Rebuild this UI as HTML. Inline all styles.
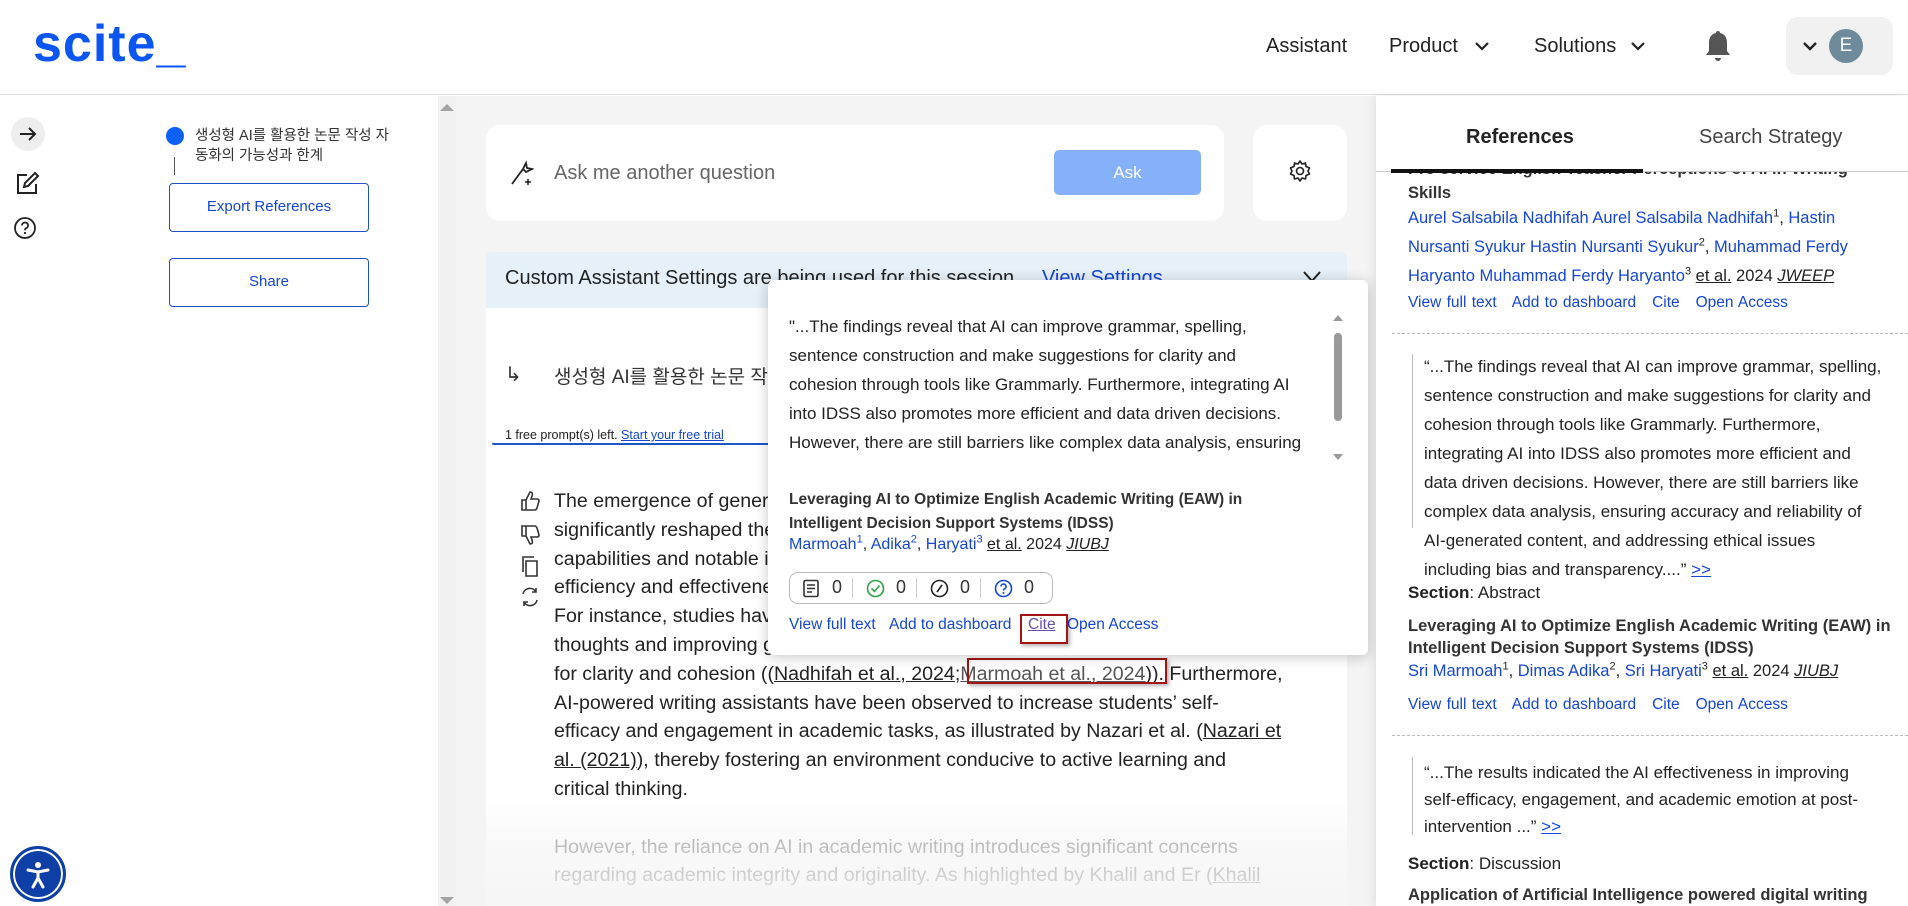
<!DOCTYPE html>
<html><head><meta charset="utf-8"><style>
*{box-sizing:border-box;margin:0;padding:0}
body{width:1908px;height:906px;overflow:hidden;font-family:"Liberation Sans","Noto Sans CJK KR",sans-serif;background:#fff;color:#222;position:relative}
.a{position:absolute}
.blue{color:#1546d6}
u{text-decoration:underline}
sup{line-height:0;font-size:11px}
</style></head><body>
<!-- header -->
<div class="a" style="left:0;top:0;width:1908px;height:95px;border-bottom:1px solid #ddd;background:#fff"></div>
<div class="a" style="left:33px;top:14px;font-size:52px;font-weight:bold;color:#0b55f0;letter-spacing:1px">scite_</div>
<div class="a" style="left:1266px;top:35px;font-size:20px;color:#222">Assistant</div>
<div class="a" style="left:1389px;top:35px;font-size:20px;color:#222">Product</div>
<svg class="a" style="left:1474px;top:40px" width="16" height="12" viewBox="0 0 16 12"><path d="M2 3l6 6 6-6" stroke="#222" stroke-width="2.2" fill="none"/></svg>
<div class="a" style="left:1534px;top:35px;font-size:20px;color:#222">Solutions</div>
<svg class="a" style="left:1630px;top:40px" width="16" height="12" viewBox="0 0 16 12"><path d="M2 3l6 6 6-6" stroke="#222" stroke-width="2.2" fill="none"/></svg>
<svg class="a" style="left:1703px;top:29px" width="30" height="34" viewBox="0 0 30 34"><path d="M15 2c1.5 0 2 1 2 2c5 1 7 5 7 10v8l3 4H3l3-4v-8c0-5 2-9 7-10c0-1 .5-2 2-2z" fill="#555"/><path d="M12 29a3 3 0 0 0 6 0z" fill="#555"/></svg>
<div class="a" style="left:1786px;top:17px;width:107px;height:58px;border-radius:12px;background:#f1f1f1"></div>
<svg class="a" style="left:1802px;top:40px" width="16" height="12" viewBox="0 0 16 12"><path d="M2 3l6 6 6-6" stroke="#222" stroke-width="2.4" fill="none"/></svg>
<div class="a" style="left:1829px;top:29px;width:34px;height:34px;border-radius:50%;background:#6f8a9b;color:#fff;font-size:19px;text-align:center;line-height:34px">E</div>

<!-- left nav -->
<div class="a" style="left:11px;top:117px;width:34px;height:34px;border-radius:50%;background:#eee"></div>
<svg class="a" style="left:17px;top:124px" width="22" height="20" viewBox="0 0 22 20"><path d="M3 10h15M12 4l6 6-6 6" stroke="#222" stroke-width="2" fill="none"/></svg>
<svg class="a" style="left:15px;top:170px" width="26" height="26" viewBox="0 0 26 26"><path d="M12 5H3v18h18v-9" stroke="#222" stroke-width="2" fill="none"/><path d="M9 17l1-4 10-10 3 3-10 10z" stroke="#222" stroke-width="2" fill="none"/></svg>
<svg class="a" style="left:13px;top:216px" width="24" height="24" viewBox="0 0 24 24"><circle cx="12" cy="12" r="10" stroke="#222" stroke-width="1.8" fill="none"/><path d="M9 9.5a3 3 0 1 1 4 2.8c-.8.4-1 1-1 2" stroke="#222" stroke-width="1.8" fill="none"/><circle cx="12" cy="17" r="1.1" fill="#222"/></svg>

<div class="a" style="left:166px;top:127px;width:18px;height:18px;border-radius:50%;background:#0b60f5"></div>
<div class="a" style="left:174px;top:157px;width:1px;height:18px;background:#555"></div>
<div class="a" style="left:195px;top:126px;font-size:14.5px;line-height:20px;color:#333;width:220px">생성형 AI를 활용한 논문 작성 자<br>동화의 가능성과 한계</div>
<div class="a" style="left:169px;top:183px;width:200px;height:49px;border:1.5px solid #1f4fc9;border-radius:4px;text-align:center;line-height:46px;font-size:15px;color:#1546d6">Export References</div>
<div class="a" style="left:169px;top:258px;width:200px;height:49px;border:1.5px solid #1f4fc9;border-radius:4px;text-align:center;line-height:46px;font-size:15px;color:#1546d6">Share</div>

<!-- scrollbar -->
<div class="a" style="left:438px;top:96px;width:18px;height:810px;background:#f1f1f1"></div>
<div class="a" style="left:440px;top:104px;width:0;height:0;border-left:7px solid transparent;border-right:7px solid transparent;border-bottom:7px solid #a3a3a3"></div>
<div class="a" style="left:440px;top:897px;width:0;height:0;border-left:7px solid transparent;border-right:7px solid transparent;border-top:7px solid #a3a3a3"></div>

<!-- main -->
<div class="a" style="left:456px;top:96px;width:920px;height:810px;background:#f4f4f4"></div>
<div class="a" style="left:486px;top:125px;width:738px;height:96px;background:#fff;border-radius:14px"></div>
<svg class="a" style="left:508px;top:160px" width="26" height="28" viewBox="0 0 26 28"><path d="M4 24L15 9M15 9l3-6 1 5 5 1-6 3z" stroke="#222" stroke-width="1.8" fill="none"/><path d="M20 19v6M17 22h6" stroke="#222" stroke-width="1.6"/></svg>
<div class="a" style="left:554px;top:162px;font-size:20px;color:#666">Ask me another question</div>
<div class="a" style="left:1054px;top:150px;width:147px;height:45px;border-radius:5px;background:#84b1fa;color:#fff;font-size:17px;text-align:center;line-height:45px">Ask</div>
<div class="a" style="left:1253px;top:125px;width:94px;height:96px;background:#fff;border-radius:14px"></div>
<svg class="a" style="left:1288px;top:159px" width="24" height="24" viewBox="0 0 24 24"><path d="M12 2l2 3 3.5-1 .5 3.5L21.5 9 20 12l1.5 3-3.5 1.5-.5 3.5-3.5-1-2 3-2-3-3.5 1-.5-3.5L2.5 15 4 12 2.5 9 6 7.5 6.5 4 10 5z" stroke="#222" stroke-width="1.6" fill="none" stroke-linejoin="round"/><circle cx="12" cy="12" r="3.5" stroke="#222" stroke-width="1.6" fill="none"/></svg>

<div class="a" style="left:486px;top:252px;width:861px;height:56px;background:#e6f0f8;border-radius:6px 6px 0 0"></div>
<div class="a" style="left:505px;top:267px;font-size:20px;color:#222">Custom Assistant Settings are being used for this session. &nbsp;&nbsp; <span class="blue">View Settings</span></div>
<svg class="a" style="left:1302px;top:270px" width="20" height="14" viewBox="0 0 20 14"><path d="M2 2l8 9 8-9" stroke="#222" stroke-width="2" fill="none"/></svg>
<div class="a" style="left:486px;top:308px;width:861px;height:598px;background:#fff"></div>
<div class="a" style="left:505px;top:362px;font-size:20px;color:#333">↳</div>
<div class="a" style="left:554px;top:362px;font-size:19px;color:#333">생성형 AI를 활용한 논문 작성 자동화의 가능성과 한계</div>
<div class="a" style="left:505px;top:428px;font-size:12.5px;color:#222">1 free prompt(s) left. <u class="blue">Start your free trial</u></div>
<div class="a" style="left:492px;top:443px;width:855px;height:2px;background:#1d56c9;border-radius:0 0 0 8px"></div>

<!-- action icons -->
<svg class="a" style="left:520px;top:490px" width="20" height="22" viewBox="0 0 20 22"><path d="M2 10h4v10H2zM6 10l4-8c2 0 3 1 2 4l-1 3h6c1.5 0 2 1 2 2l-2 7c-.5 1-1 2-2 2H6" stroke="#333" stroke-width="1.6" fill="none"/></svg>
<svg class="a" style="left:520px;top:524px" width="20" height="22" viewBox="0 0 20 22"><path d="M2 2h4v10H2zM6 12l4 8c2 0 3-1 2-4l-1-3h6c1.5 0 2-1 2-2l-2-7c-.5-1-1-2-2-2H6" stroke="#333" stroke-width="1.6" fill="none"/></svg>
<svg class="a" style="left:520px;top:555px" width="20" height="22" viewBox="0 0 20 22"><path d="M6 6h11v15H6zM3 17V2h11" stroke="#333" stroke-width="1.6" fill="none"/></svg>
<svg class="a" style="left:520px;top:585px" width="20" height="24" viewBox="0 0 20 24"><path d="M3 9a7 7 0 0 1 13-2M17 15a7 7 0 0 1-13 2M16 3v4h-4M4 21v-4h4" stroke="#333" stroke-width="1.6" fill="none"/></svg>

<div class="a" style="left:554px;top:487px;width:800px;font-size:19.6px;line-height:28.8px;color:#222;white-space:nowrap">
The emergence of generative AI technologies, such as large language models, has<br>
significantly reshaped the landscape of academic writing by offering advanced<br>
capabilities and notable improvements in writing quality, productivity,<br>
efficiency and effectiveness for students and researchers in higher education.<br>
For instance, studies have demonstrated that AI tools assist in organizing<br>
thoughts and improving grammar, spelling, and sentence construction, making suggestions<br>
for clarity and cohesion ((<u>Nadhifah et al., 2024</u>;<u style="color:#555">Marmoah et al., 2024</u>)). Furthermore,<br>
AI-powered writing assistants have been observed to increase students’ self-<br>
efficacy and engagement in academic tasks, as illustrated by Nazari et al. (<u>Nazari et</u><br>
<u>al. (2021)</u>), thereby fostering an environment conducive to active learning and<br>
critical thinking.<br><br>
<span style="color:#777">However, the reliance on AI in academic writing introduces significant concerns<br>
regarding academic integrity and originality. As highlighted by Khalil and Er (<u>Khalil</u></span>
</div>
<div class="a" style="left:486px;top:800px;width:861px;height:106px;background:linear-gradient(rgba(244,244,244,0),rgba(244,244,244,.55) 40%,rgba(244,244,244,.85))"></div>
<div class="a" style="left:967px;top:658px;width:200px;height:26px;border:2px solid #a31515;box-shadow:2px 2px 4px rgba(0,0,0,.3)"></div>

<!-- popup -->
<div class="a" style="left:768px;top:280px;width:600px;height:375px;background:#fff;border-radius:6px;box-shadow:0 2px 14px rgba(0,0,0,.22)"></div>
<div class="a" style="left:789px;top:312px;width:545px;height:150px;overflow:hidden;font-size:17px;line-height:29px;color:#222;white-space:nowrap">"...The findings reveal that AI can improve grammar, spelling,<br>sentence construction and make suggestions for clarity and<br>cohesion through tools like Grammarly. Furthermore, integrating AI<br>into IDSS also promotes more efficient and data driven decisions.<br>However, there are still barriers like complex data analysis, ensuring<br>accuracy and reliability of AI-generated content, and addressing ethical</div>
<div class="a" style="left:1333px;top:315px;width:0;height:0;border-left:5px solid transparent;border-right:5px solid transparent;border-bottom:6px solid #999"></div>
<div class="a" style="left:1334px;top:333px;width:8px;height:88px;border-radius:4px;background:#999"></div>
<div class="a" style="left:1333px;top:454px;width:0;height:0;border-left:5px solid transparent;border-right:5px solid transparent;border-top:6px solid #999"></div>
<div class="a" style="left:789px;top:488px;font-size:15.5px;line-height:24px;font-weight:bold;color:#333">Leveraging AI to Optimize English Academic Writing (EAW) in<br>Intelligent Decision Support Systems (IDSS)</div>
<div class="a" style="left:789px;top:536px;font-size:16px;color:#222"><span class="blue">Marmoah</span><sup class="blue">1</sup>, <span class="blue">Adika</span><sup class="blue">2</sup>, <span class="blue">Haryati</span><sup class="blue">3</sup> <u>et al.</u> 2024 <u><i>JIUBJ</i></u></div>
<div class="a" style="left:789px;top:572px;width:264px;height:32px;border:1px solid #bbb;border-radius:9px"></div>
<svg class="a" style="left:802px;top:579px" width="18" height="19" viewBox="0 0 18 19"><rect x="2" y="1.5" width="14" height="16" rx="1.5" stroke="#333" stroke-width="1.6" fill="none"/><path d="M5 6h8M5 9.5h8M5 13h5" stroke="#333" stroke-width="1.6"/></svg>
<div class="a" style="left:832px;top:577px;font-size:18px;color:#333">0</div>
<div class="a" style="left:852px;top:578px;width:1px;height:20px;background:#ccc"></div>
<svg class="a" style="left:866px;top:579px" width="19" height="19" viewBox="0 0 19 19"><circle cx="9.5" cy="9.5" r="8" stroke="#2aa048" stroke-width="1.6" fill="none"/><path d="M5.5 9.5l3 3 5-6" stroke="#2aa048" stroke-width="1.6" fill="none"/></svg>
<div class="a" style="left:896px;top:577px;font-size:18px;color:#333">0</div>
<div class="a" style="left:916px;top:578px;width:1px;height:20px;background:#ccc"></div>
<svg class="a" style="left:930px;top:579px" width="19" height="19" viewBox="0 0 19 19"><circle cx="9.5" cy="9.5" r="8" stroke="#222" stroke-width="1.6" fill="none"/><path d="M7 13l5-7" stroke="#222" stroke-width="1.6"/></svg>
<div class="a" style="left:960px;top:577px;font-size:18px;color:#333">0</div>
<div class="a" style="left:980px;top:578px;width:1px;height:20px;background:#ccc"></div>
<svg class="a" style="left:994px;top:579px" width="19" height="19" viewBox="0 0 19 19"><circle cx="9.5" cy="9.5" r="8" stroke="#1546d6" stroke-width="1.6" fill="none"/><path d="M7 7.5a2.5 2.5 0 1 1 3.5 2.3c-.7.3-1 .8-1 1.7" stroke="#1546d6" stroke-width="1.6" fill="none"/><circle cx="9.5" cy="14" r="1" fill="#1546d6"/></svg>
<div class="a" style="left:1024px;top:577px;font-size:18px;color:#333">0</div>
<div class="a blue" style="left:789px;top:616px;font-size:15.5px">View full text</div>
<div class="a blue" style="left:889px;top:616px;font-size:15.5px">Add to dashboard</div>
<div class="a" style="left:1028px;top:616px;font-size:15.5px;color:#6a4fb0"><u>Cite</u></div>
<div class="a blue" style="left:1067px;top:616px;font-size:15.5px">Open Access</div>
<div class="a" style="left:1020px;top:614px;width:48px;height:30px;border:2px solid #a31515;box-shadow:2px 2px 4px rgba(0,0,0,.3)"></div>

<!-- accessibility -->
<div class="a" style="left:10px;top:846px;width:56px;height:56px;border-radius:50%;background:#0d3fa6;border:3px solid #0d3fa6;box-shadow:inset 0 0 0 2px #fff"></div>
<svg class="a" style="left:22px;top:858px" width="32" height="32" viewBox="0 0 32 32"><circle cx="16" cy="7" r="3" fill="#fff"/><path d="M6 12l10 2 10-2M16 14v6l-5 9M16 20l5 9" stroke="#fff" stroke-width="3" fill="none" stroke-linecap="round"/></svg>

<!-- right panel -->
<div class="a" style="left:1376px;top:96px;width:532px;height:810px;background:#fff;box-shadow:-3px 0 8px rgba(0,0,0,.08);overflow:hidden">
  <div class="a" style="left:32px;top:61px;width:480px;font-size:16.5px;font-weight:bold;color:#333;line-height:24px">Pre-service English Teacher Perceptions of AI in Writing<br>Skills</div>
  <div class="a" style="left:0;top:0;width:532px;height:76px;background:#fff"></div>
  <div class="a" style="left:0;top:75px;width:532px;height:1px;background:#ccc"></div>
  <div class="a" style="left:15px;top:73px;width:252px;height:4px;background:#111"></div>
  <div class="a" style="left:90px;top:30px;font-size:20px;font-weight:bold;color:#222">References</div>
  <div class="a" style="left:323px;top:30px;font-size:20px;color:#444">Search Strategy</div>
  <div class="a" style="left:32px;top:108px;font-size:16.5px;line-height:29px;color:#222;white-space:nowrap"><span class="blue">Aurel Salsabila Nadhifah Aurel Salsabila Nadhifah</span><sup>1</sup>, <span class="blue">Hastin</span><br><span class="blue">Nursanti Syukur Hastin Nursanti Syukur</span><sup>2</sup>, <span class="blue">Muhammad Ferdy</span><br><span class="blue">Haryanto Muhammad Ferdy Haryanto</span><sup>3</sup> <u>et al.</u> 2024 <u><i>JWEEP</i></u></div>
  <div class="a blue" style="left:32px;top:198px;font-size:15.5px;word-spacing:1px">View full text &nbsp; Add to dashboard &nbsp; Cite &nbsp; Open Access</div>
  <div class="a" style="left:16px;top:237px;width:516px;border-top:1px dashed #bbb"></div>
  <div class="a" style="left:36px;top:258px;width:1px;height:174px;background:#bbb"></div>
  <div class="a" style="left:48px;top:256px;font-size:17px;line-height:29px;color:#222;white-space:nowrap">“...The findings reveal that AI can improve grammar, spelling,<br>sentence construction and make suggestions for clarity and<br>cohesion through tools like Grammarly. Furthermore,<br>integrating AI into IDSS also promotes more efficient and<br>data driven decisions. However, there are still barriers like<br>complex data analysis, ensuring accuracy and reliability of<br>AI-generated content, and addressing ethical issues<br>including bias and transparency....” <u class="blue">&gt;&gt;</u></div>
  <div class="a" style="left:32px;top:487px;font-size:17px;color:#222"><b>Section</b>: Abstract</div>
  <div class="a" style="left:32px;top:519px;width:500px;font-size:16.5px;font-weight:bold;color:#333;line-height:22px;white-space:nowrap">Leveraging AI to Optimize English Academic Writing (EAW) in<br>Intelligent Decision Support Systems (IDSS)</div>
  <div class="a" style="left:32px;top:566px;font-size:16.5px;color:#222"><span class="blue">Sri Marmoah</span><sup>1</sup>, <span class="blue">Dimas Adika</span><sup>2</sup>, <span class="blue">Sri Haryati</span><sup>3</sup> <u>et al.</u> 2024 <u><i>JIUBJ</i></u></div>
  <div class="a blue" style="left:32px;top:600px;font-size:15.5px;word-spacing:1px">View full text &nbsp; Add to dashboard &nbsp; Cite &nbsp; Open Access</div>
  <div class="a" style="left:16px;top:639px;width:516px;border-top:1px dashed #bbb"></div>
  <div class="a" style="left:36px;top:661px;width:1px;height:78px;background:#bbb"></div>
  <div class="a" style="left:48px;top:663px;font-size:17px;line-height:27px;color:#222;white-space:nowrap">“...The results indicated the AI effectiveness in improving<br>self-efficacy, engagement, and academic emotion at post-<br>intervention ...” <u class="blue">&gt;&gt;</u></div>
  <div class="a" style="left:32px;top:758px;font-size:17px;color:#222"><b>Section</b>: Discussion</div>
  <div class="a" style="left:32px;top:790px;font-size:16.5px;font-weight:bold;color:#333;white-space:nowrap">Application of Artificial Intelligence powered digital writing</div>
</div>
</body></html>
